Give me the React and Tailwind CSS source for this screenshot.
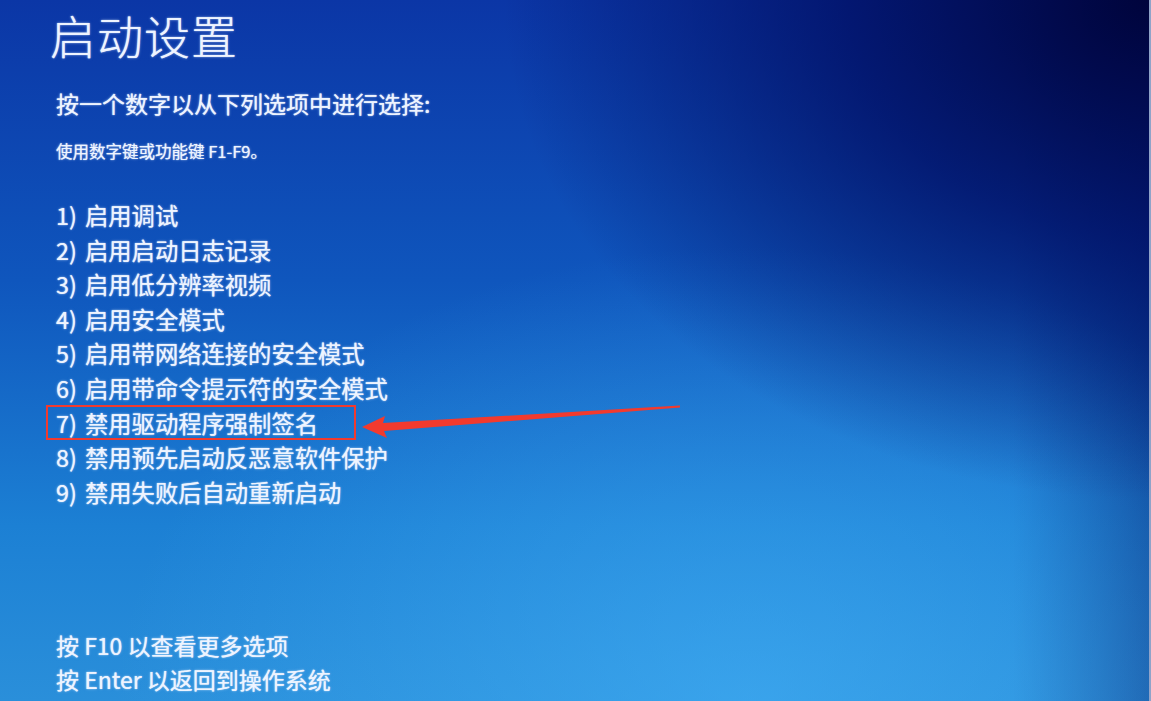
import React from "react";

const items = [
  "1) 启用调试",
  "2) 启用启动日志记录",
  "3) 启用低分辨率视频",
  "4) 启用安全模式",
  "5) 启用带网络连接的安全模式",
  "6) 启用带命令提示符的安全模式",
  "7) 禁用驱动程序强制签名",
  "8) 禁用预先启动反恶意软件保护",
  "9) 禁用失败后自动重新启动",
];

export default function App() {
  return (
    <div
      className="relative w-[1151px] h-[701px] overflow-hidden text-[#eef4ff] bg-[radial-gradient(ellipse_75%_95%_at_100%_0%,rgba(0,4,60,1)_0%,rgba(0,12,95,0.75)_35%,rgba(0,20,120,0)_75%),radial-gradient(ellipse_55%_65%_at_65%_100%,rgba(70,180,250,0.55)_0%,rgba(70,180,250,0)_100%),linear-gradient(to_left,rgba(0,20,100,0.45)_0%,rgba(0,20,100,0)_12%),linear-gradient(to_bottom,#0b36a6_0%,#0f56bd_40%,#1c80d4_75%,#2a8fda_100%)]"
      style={{ fontFamily: '"Noto Sans CJK SC", "Noto Sans", sans-serif' }}
    >
      <div className="flex flex-col pl-[56px] pt-[9px] [text-shadow:0_0_1px_rgba(240,246,255,0.9),0_0_3px_rgba(200,225,255,0.5)]">
        <h1 className="ml-[-6px] text-[46px] leading-[50px] font-light tracking-[1px]">启动设置</h1>
        <p className="mt-[30px] text-[23px] leading-[28px]">按一个数字以从下列选项中进行选择:</p>
        <p className="mt-[23px] text-[16.5px] leading-[22px]">使用数字键或功能键 F1-F9。</p>
        <ul className="mt-[36px] flex flex-col">
          {items.map((t, i) => (
            <li key={i} className="relative h-[34.6px] text-[23.3px] leading-[34.6px] [word-spacing:3px]">
              {i === 6 && (
                <span className="absolute left-[-10px] top-[-1px] w-[310px] h-[35px] border-[2.5px] border-[#f23a2e]" />
              )}
              <span className="relative">{t}</span>
            </li>
          ))}
        </ul>
        <div className="mt-[119px] flex flex-col text-[23px] leading-[34px]">
          <p>按 F10 以查看更多选项</p>
          <p>按 Enter 以返回到操作系统</p>
        </div>
      </div>

      <svg
        className="absolute inset-0 pointer-events-none"
        width="1151"
        height="701"
        viewBox="0 0 1151 701"
      >
        <polygon
          points="362,427 385,416 383,423 680,405.5 680,407.5 384,431 387,438"
          fill="#f23a2e"
        />
      </svg>

      <div className="absolute right-0 top-0 h-full w-[2px] bg-[#8fa3c9]" />
    </div>
  );
}
